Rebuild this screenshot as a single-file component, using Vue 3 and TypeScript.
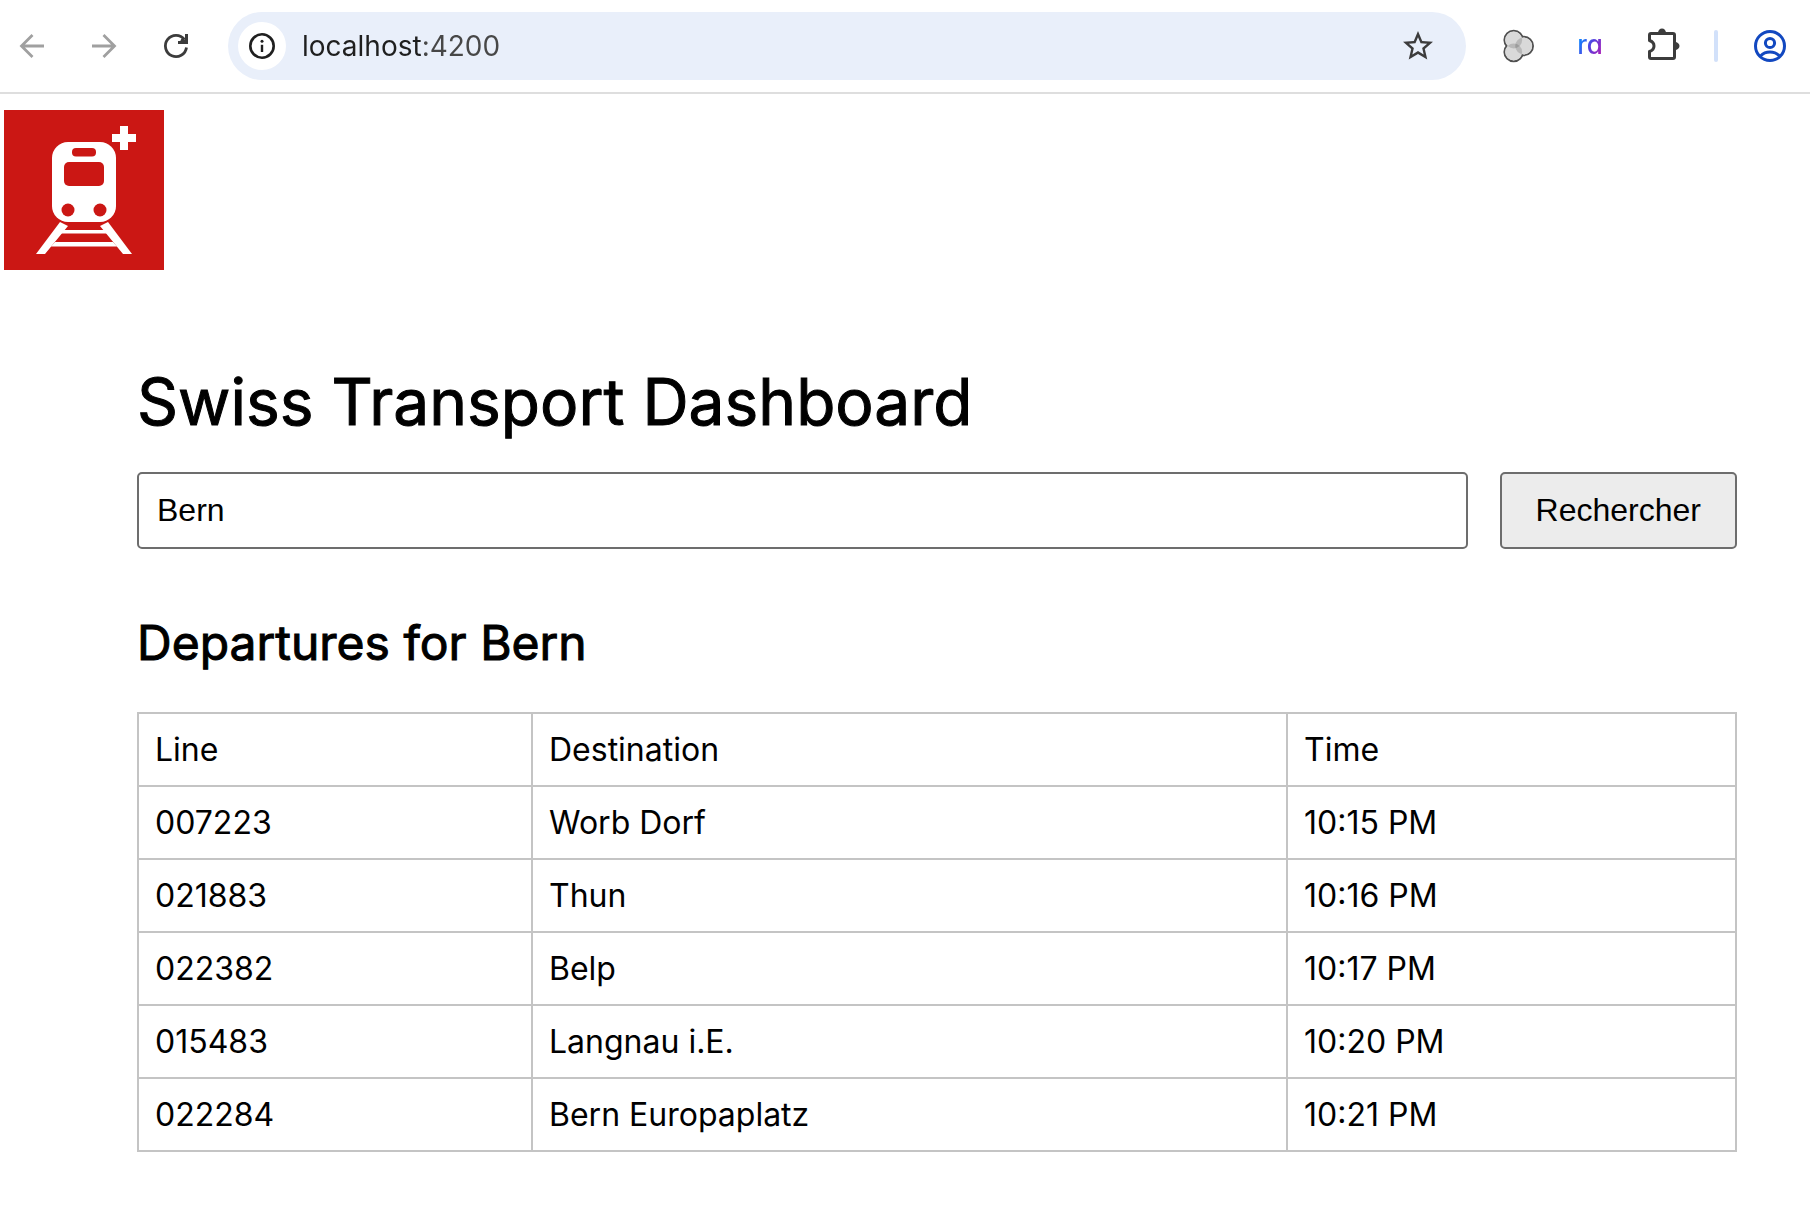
<script setup lang="ts">
import { ref } from 'vue'

interface Departure {
  line: string
  destination: string
  time: string
}

const address = ref('localhost:4200')
const query = ref('Bern')
const station = ref('Bern')

const departures: Departure[] = [
  { line: '007223', destination: 'Worb Dorf', time: '10:15 PM' },
  { line: '021883', destination: 'Thun', time: '10:16 PM' },
  { line: '022382', destination: 'Belp', time: '10:17 PM' },
  { line: '015483', destination: 'Langnau i.E.', time: '10:20 PM' },
  { line: '022284', destination: 'Bern Europaplatz', time: '10:21 PM' },
]

function search(): void {
  station.value = query.value
}
</script>

<template>
  <div class="window">
    <header class="toolbar">
      <nav class="group">
        <button class="tool faded" type="button" aria-label="Back">
          <svg viewBox="0 0 36 36" fill="none" stroke="currentColor" stroke-width="2.8">
            <path d="M30 18H8M18.5 7L7.5 18L18.5 29" />
          </svg>
        </button>
        <button class="tool faded" type="button" aria-label="Forward">
          <svg viewBox="0 0 36 36" fill="none" stroke="currentColor" stroke-width="2.8">
            <path d="M6 18H28M17.5 7L28.5 18L17.5 29" />
          </svg>
        </button>
        <button class="tool" type="button" aria-label="Reload">
          <svg viewBox="0 0 36 36" fill="none" stroke="currentColor" stroke-width="2.8">
            <path d="M28.5 19.5A10.6 10.6 0 1 1 26.5 11.7" />
            <path d="M28.5 6V14.5H20" stroke-width="3" />
            <path d="M23 11.5L28 14" stroke-width="3" />
          </svg>
        </button>
      </nav>

      <div class="omnibox">
        <button class="site-info" type="button" aria-label="Site information">
          <svg viewBox="0 0 26 26">
            <circle cx="13" cy="13" r="11.7" fill="none" stroke="currentColor" stroke-width="2.6" />
            <circle cx="13" cy="8.2" r="1.5" fill="currentColor" />
            <path d="M13 11.8V19" stroke="currentColor" stroke-width="2.4" />
          </svg>
        </button>
        <input v-model="address" class="address" type="text" aria-label="Address" spellcheck="false" />
        <button class="tool" type="button" aria-label="Bookmark this page">
          <svg viewBox="0 0 24 24" fill="currentColor">
            <path d="M22 9.24l-7.19-.62L12 2 9.19 8.63 2 9.24l5.46 4.73L5.82 21 12 17.27 18.18 21l-1.63-7.03L22 9.24zM12 15.4l-3.76 2.27 1-4.28-3.32-2.88 4.38-.38L12 6.1l1.71 4.04 4.38.38-3.32 2.88 1 4.28L12 15.4z" />
          </svg>
        </button>
      </div>

      <div class="group">
        <button class="tool" type="button" aria-label="Color extension">
          <svg viewBox="0 0 36 36">
            <g fill="#ffffff" stroke="#505050" stroke-width="2">
              <circle cx="13.7" cy="12" r="9.3" />
              <circle cx="13.7" cy="24" r="9.3" />
              <circle cx="23.7" cy="18" r="9.3" />
            </g>
            <g fill="#ffffff">
              <circle cx="13.7" cy="12" r="8.5" />
              <circle cx="13.7" cy="24" r="8.5" />
              <circle cx="23.7" cy="18" r="8.5" />
            </g>
            <g fill="#000000" fill-opacity="0.15">
              <circle cx="13.7" cy="12" r="8.5" />
              <circle cx="13.7" cy="24" r="8.5" />
              <circle cx="23.7" cy="18" r="8.5" />
            </g>
          </svg>
        </button>
        <button class="tool brand" type="button"><span>ra</span></button>
        <button class="tool" type="button" aria-label="Extensions">
          <svg viewBox="0 0 36 36">
            <path
              d="M5.5 12.5V7Q5.5 5.5 7 5.5H29Q30.5 5.5 30.5 7V29Q30.5 30.5 29 30.5H7Q5.5 30.5 5.5 29V23.5C8.5 22.5 10 20.5 10 18S8.5 13.5 5.5 12.5Z"
              fill="none"
              stroke="currentColor"
              stroke-width="3"
              stroke-linejoin="round"
            />
            <path d="M14 5A4 4.5 0 0 1 22 5ZM31 14A4.5 4 0 0 1 31 22Z" fill="currentColor" />
          </svg>
        </button>
        <span class="divider"></span>
        <button class="tool profile" type="button" aria-label="Profile">
          <svg viewBox="0 0 36 36" fill="none" stroke="currentColor" stroke-width="3">
            <circle cx="18" cy="18" r="14.5" />
            <circle cx="18" cy="15" r="4.6" />
            <path d="M8.5 28C13.5 22.8 22.5 22.8 27.5 28" />
          </svg>
        </button>
      </div>
    </header>

    <svg class="logo" viewBox="0 0 160 160" role="img" aria-label="Swiss Transport">
      <rect width="160" height="160" fill="#cb1714" />
      <g fill="#ffffff">
        <path d="M116 16h8v8h8v8h-8v8h-8v-8h-8v-8h8z" />
        <rect x="48" y="32" width="64" height="80" rx="16" />
        <path d="M56 112L64 116L41 144H32ZM104 112L96 116L119 144H128Z" />
        <path d="M60 120H100L103 123.5H57ZM51 132H109L113 136.5H47Z" />
      </g>
      <g fill="#cb1714">
        <rect x="68" y="38" width="24" height="8.5" rx="4" />
        <rect x="60" y="52" width="40" height="24" rx="5" />
        <circle cx="64" cy="100" r="6.5" />
        <circle cx="96" cy="100" r="6.5" />
      </g>
    </svg>

    <main class="dashboard">
      <h1>Swiss Transport Dashboard</h1>
      <form class="search" @submit.prevent="search">
        <input v-model="query" type="text" aria-label="Station" />
        <button type="submit">Rechercher</button>
      </form>

      <h2>Departures for {{ station }}</h2>
      <table>
        <thead>
          <tr>
            <th class="line" scope="col">Line</th>
            <th class="destination" scope="col">Destination</th>
            <th scope="col">Time</th>
          </tr>
        </thead>
        <tbody>
          <tr v-for="departure in departures" :key="departure.line">
            <td>{{ departure.line }}</td>
            <td>{{ departure.destination }}</td>
            <td>{{ departure.time }}</td>
          </tr>
        </tbody>
      </table>
    </main>
  </div>
</template>

<style>
body {
  margin: 0;
  background: #ffffff;
}
</style>

<style scoped>
.window {
  color: #000000;
  font-family: Inter, sans-serif;
  font-size: 32px;
}

.toolbar {
  display: flex;
  align-items: center;
  gap: 34px;
  padding: 12px 22px 12px 14px;
  border-bottom: 2px solid #dedede;
}

.group {
  display: flex;
  align-items: center;
  gap: 36px;
}

.tool {
  display: flex;
  flex: none;
  align-items: center;
  justify-content: center;
  width: 36px;
  height: 36px;
  padding: 0;
  border: 0;
  background: none;
  color: #3c3c3c;
}

.tool svg {
  width: 36px;
  height: 36px;
}

.faded {
  color: #a0a0a0;
}

.profile {
  color: #1248c0;
}

.brand {
  padding-bottom: 4px;
  font: 500 26px Inter, sans-serif;
  font-feature-settings: 'cv11';
}

.brand span {
  background: linear-gradient(120deg, #0c84ff 20%, #5a3cdc 55%, #b01cb4 90%);
  background-clip: text;
  color: transparent;
}

.divider {
  width: 4px;
  height: 32px;
  margin: 0 -2px;
  border-radius: 2px;
  background: #d2e1fa;
}

.omnibox {
  display: flex;
  flex: 1;
  align-items: center;
  gap: 16px;
  height: 68px;
  box-sizing: border-box;
  padding: 0 30px 0 10px;
  border-radius: 34px;
  background: #e9effa;
}

.site-info {
  display: flex;
  flex: none;
  align-items: center;
  justify-content: center;
  width: 48px;
  height: 48px;
  padding: 0;
  border: 0;
  border-radius: 50%;
  background: #ffffff;
  color: #1f1f1f;
}

.site-info svg {
  width: 26px;
  height: 26px;
}

/* The host is darker than the port that follows it. */
.address {
  flex: 1;
  min-width: 0;
  padding: 0;
  border: 0;
  outline: 0;
  background: linear-gradient(90deg, #1f1f1f 119px, #474747 119px);
  background-clip: text;
  color: transparent;
  font: 400 28px Inter, sans-serif;
}

.logo {
  display: block;
  width: 160px;
  height: 160px;
  margin: 16px 4px 0;
}

.dashboard {
  padding: 93px 73px 60px 137px;
}

h1,
h2 {
  margin: 0;
  font-weight: 400;
  -webkit-text-stroke: 1px #000000;
}

h1 {
  font-size: 64px;
  line-height: 78px;
}

h2 {
  margin-top: 65px;
  font-size: 48px;
  line-height: 58px;
}

.search {
  display: flex;
  gap: 32px;
  margin-top: 31px;
}

.search input,
.search button {
  height: 77px;
  box-sizing: border-box;
  border: 2px solid #6d6d6d;
  border-radius: 5px;
  color: #000000;
  font: 400 32px 'Liberation Sans', Arial, sans-serif;
}

.search input {
  flex: 1;
  min-width: 0;
  padding: 0 18px;
  background: #ffffff;
}

.search button {
  padding: 0 34px;
  background: #ececec;
}

table {
  width: 100%;
  margin-top: 40px;
  border-collapse: collapse;
  table-layout: fixed;
}

th,
td {
  padding: 16px;
  border: 2px solid #c4c4c4;
  font-weight: 400;
  line-height: 39px;
  text-align: left;
}

.line {
  width: 360px;
}

.destination {
  width: 721px;
}
</style>
